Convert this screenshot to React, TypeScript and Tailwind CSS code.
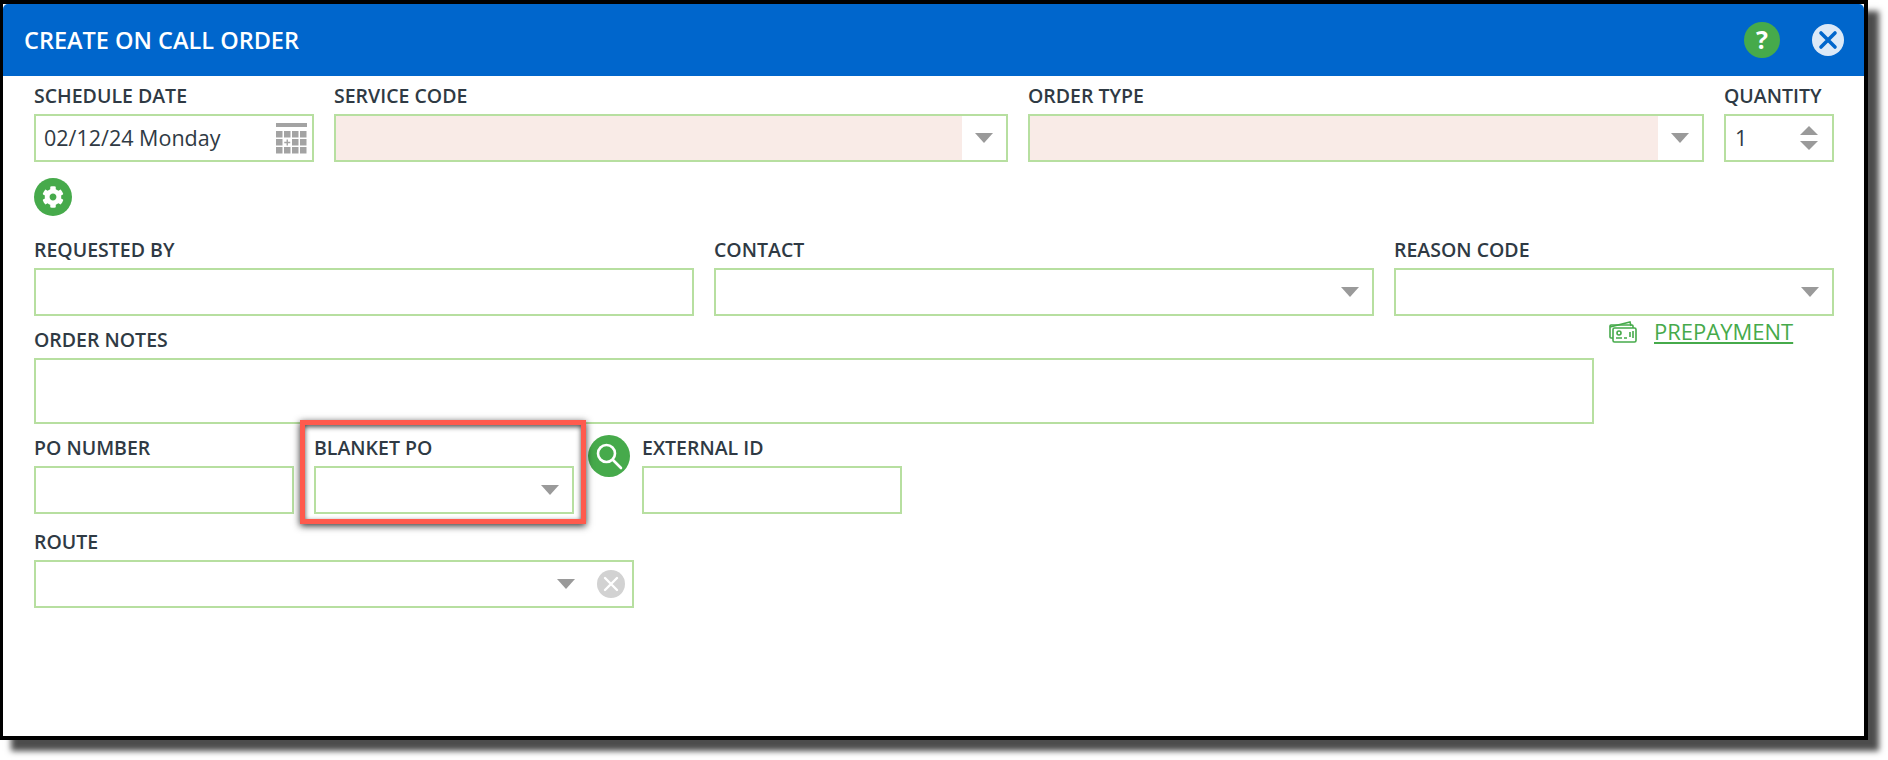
import { FaCog } from 'react-icons/fa';

const labelClass = 'block h-[20px] leading-[20px] mb-[8px] text-[19.5px] font-semibold text-[#2f3a44] whitespace-nowrap';
const boxClass = 'h-[48px] border-2 border-[#b7dfa0] bg-white flex items-center';

function Caret() {
  return (
    <svg width="18" height="10" viewBox="0 0 18 10" className="shrink-0">
      <path d="M0 0h18l-9 10z" fill="#9a9a9a" />
    </svg>
  );
}

function CalendarIcon() {
  const cells = [];
  for (let r = 0; r < 3; r++) {
    for (let c = 0; c < 4; c++) {
      if (r === 1 && c === 1) continue;
      cells.push(<rect key={`${r}-${c}`} x={c * 8} y={8 + r * 8} width="6.5" height="6.5" fill="#a3a3a3" />);
    }
  }
  return (
    <svg width="31" height="31" viewBox="0 0 31 31">
      <rect width="31" height="4" fill="#a3a3a3" />
      {cells}
      <path d="M11.25 16.5v6M8.25 19.5h6" stroke="#a3a3a3" strokeWidth="1.4" />
    </svg>
  );
}

function CashIcon() {
  return (
    <svg width="28" height="24" viewBox="0 0 28 24" fill="none" stroke="#46aa4b" strokeWidth="1.6">
      <path d="M1 8l20-5 1 4" />
      <rect x="1" y="6" width="23" height="13" rx="1" />
      <rect x="4" y="9" width="23" height="14" rx="1.5" fill="#fff" />
      <circle cx="10" cy="14" r="2" />
      <path d="M7 19h6M15 19h3M21 13v5M24 12v7" />
    </svg>
  );
}

function Select({ className, pink }: { className: string; pink?: boolean }) {
  return (
    <div className={`${boxClass} ${className}`}>
      <div className={`flex-1 h-full ${pink ? 'bg-[#f9ebe7]' : ''}`} />
      <div className="w-[44px] flex justify-center">
        <Caret />
      </div>
    </div>
  );
}

export default function App() {
  return (
    <div className="w-[1888px] h-[760px] bg-white overflow-hidden font-['Open_Sans',sans-serif]">
      <div className="w-[1868px] h-[740px] border-[4px] border-l-[3px] border-black bg-white shadow-[11px_11px_6px_rgba(0,0,0,0.7)] relative">
        <div className="h-[72px] bg-[#0066cc] rounded-t-[5px] flex items-center pl-[21px] pr-[20px]">
          <h1 className="text-[23.5px] font-semibold text-white flex-1 pt-[2px]">CREATE ON CALL ORDER</h1>
          <div className="w-[36px] h-[36px] rounded-full bg-[#46aa4b] text-white font-bold text-[25px] flex items-center justify-center">?</div>
          <div className="w-[32px] h-[32px] ml-[32px] rounded-full bg-[#dce9f7] flex items-center justify-center">
            <svg width="20" height="20" viewBox="0 0 20 20" stroke="#0066cc" strokeWidth="3.6" strokeLinecap="round">
              <path d="M3 3l14 14M17 3L3 17" />
            </svg>
          </div>
        </div>

        <div className="pl-[31px] pt-[10px]">
          <div className="flex gap-[20px]">
            <div className="w-[280px]">
              <label className={labelClass}>SCHEDULE DATE</label>
              <div className={`${boxClass} pl-[8px] pr-[5px] justify-between`}>
                <span className="text-[21.5px] text-[#2f3a44]">02/12/24 Monday</span>
                <CalendarIcon />
              </div>
            </div>
            <div className="w-[674px]">
              <label className={labelClass}>SERVICE CODE</label>
              <Select className="" pink />
            </div>
            <div className="w-[676px]">
              <label className={labelClass}>ORDER TYPE</label>
              <Select className="" pink />
            </div>
            <div className="w-[110px]">
              <label className={labelClass}>QUANTITY</label>
              <div className={`${boxClass} pl-[9px] pr-[14px] justify-between`}>
                <span className="text-[21.5px] text-[#2f3a44]">1</span>
                <div className="flex flex-col gap-[6px]">
                  <svg width="18" height="9" viewBox="0 0 18 9"><path d="M0 9h18L9 0z" fill="#9a9a9a" /></svg>
                  <svg width="18" height="9" viewBox="0 0 18 9"><path d="M0 0h18L9 9z" fill="#9a9a9a" /></svg>
                </div>
              </div>
            </div>
          </div>

          <div className="mt-[16px] w-[38px] h-[38px] rounded-full bg-[#46aa4b] flex items-center justify-center">
            <FaCog className="text-white w-[22px] h-[22px]" />
          </div>

          <div className="flex mt-[24px]">
            <div className="w-[660px] mr-[20px]">
              <label className={labelClass}>REQUESTED BY</label>
              <div className={boxClass} />
            </div>
            <div className="w-[660px] mr-[20px]">
              <label className={labelClass}>CONTACT</label>
              <Select className="" />
            </div>
            <div className="w-[440px]">
              <label className={labelClass}>REASON CODE</label>
              <Select className="" />
            </div>
          </div>

          <div className="flex mt-[4px]">
            <div className="w-[1560px] pt-[10px]">
              <label className={labelClass}>ORDER NOTES</label>
              <div className="h-[66px] border-2 border-[#b7dfa0]" />
            </div>
            <div className="ml-[15px] h-[22px] flex items-center gap-[17px]">
              <CashIcon />
              <a className="text-[22px] text-[#46aa4b] underline underline-offset-2">PREPAYMENT</a>
            </div>
          </div>

          <div className="flex mt-[14px]">
            <div className="w-[260px]">
              <label className={labelClass}>PO NUMBER</label>
              <div className={boxClass} />
            </div>
            <div className="w-[260px] ml-[20px] relative">
              <label className={labelClass}>BLANKET PO</label>
              <Select className="" />
              <div className="absolute -left-[14px] -top-[18px] w-[286px] h-[104px] border-[5px] border-[#ff5a4d] shadow-[0_2px_7px_rgba(0,0,0,0.8),inset_0_2px_5px_rgba(0,0,0,0.7)]" />
            </div>
            <div className="w-[42px] h-[42px] ml-[14px] -mt-[3px] rounded-full bg-[#46aa4b] flex items-center justify-center">
              <svg width="30" height="30" viewBox="0 0 30 30" fill="none" stroke="#fff" strokeWidth="2.6" strokeLinecap="round">
                <circle cx="12.5" cy="12.5" r="8.5" />
                <path d="M19 19l8 8" />
              </svg>
            </div>
            <div className="w-[260px] ml-[12px]">
              <label className={labelClass}>EXTERNAL ID</label>
              <div className={boxClass} />
            </div>
          </div>

          <div className="w-[600px] mt-[18px]">
            <label className={labelClass}>ROUTE</label>
            <div className={`${boxClass} justify-end pr-[7px]`}>
              <Caret />
              <div className="w-[28px] h-[28px] ml-[22px] rounded-full bg-[#d2d2d2] flex items-center justify-center">
                <svg width="16" height="16" viewBox="0 0 16 16" stroke="#fff" strokeWidth="2.4" strokeLinecap="round">
                  <path d="M2 2l12 12M14 2L2 14" />
                </svg>
              </div>
            </div>
          </div>
        </div>
      </div>
    </div>
  );
}
